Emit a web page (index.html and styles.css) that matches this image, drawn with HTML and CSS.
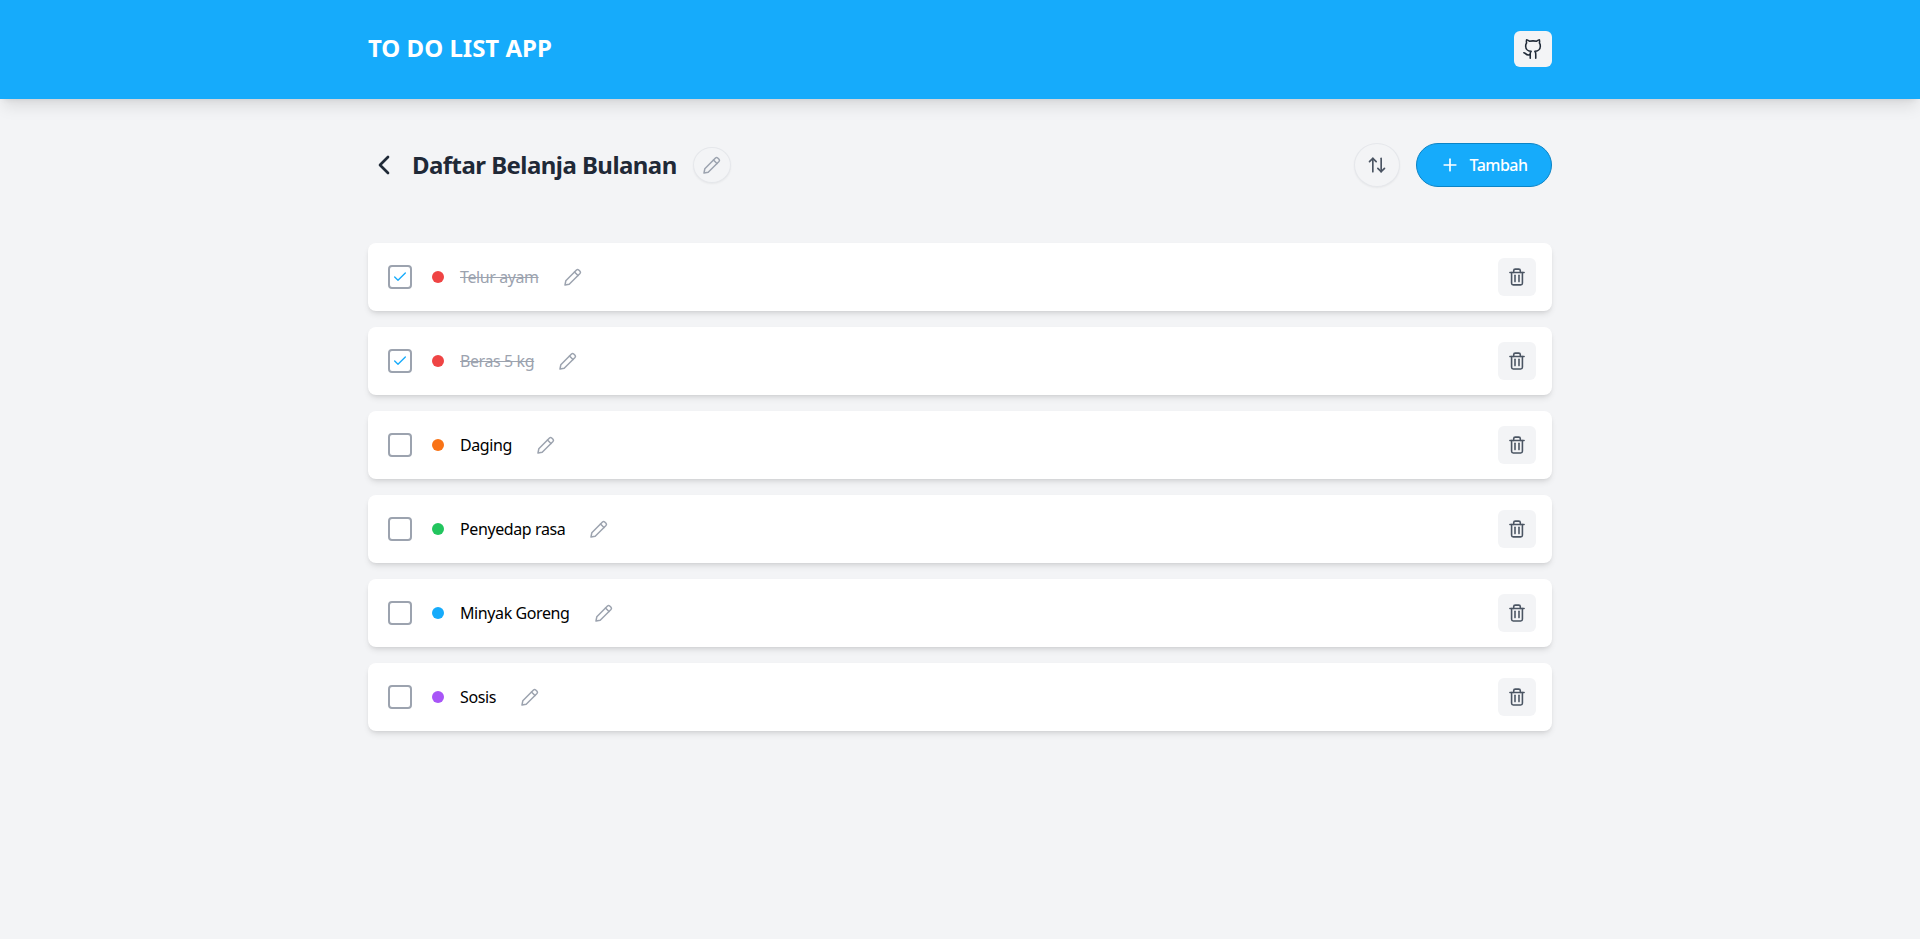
FILE: index.html
```html
<!DOCTYPE html>
<html lang="id">
<head>
<meta charset="utf-8">
<title>To Do List App</title>
<link rel="stylesheet" href="styles.css">
</head>
<body>
<svg class="sprite" aria-hidden="true">
  <symbol id="pencil" viewBox="0 0 24 24"><path d="M4 20l.8-4.200L15.500 5a1.600 1.600 0 0 1 2.200 0L19 6.300a1.600 1.600 0 0 1 0 2.200L8.200 19.200z"/><path d="m13.500 7 3.500 3.500"/></symbol>
  <symbol id="trash" viewBox="0 0 24 24"><path d="M3.500 6.500h17"/><path d="M5.500 6.500V19.500a2 2 0 0 0 2 2h9a2 2 0 0 0 2-2V6.500"/><path d="M8 6.500V4.500a2 2 0 0 1 2-2h4a2 2 0 0 1 2 2v2"/><path d="M9.600 10v7.500"/><path d="M14.400 10v7.500"/></symbol>
  <symbol id="check" viewBox="0 0 24 24"><path d="M20 6 9 17l-5-5"/></symbol>
</svg>
<header class="topbar">
  <div class="topbar-inner">
    <h1 class="brand">TO DO LIST APP</h1>
    <a class="github" href="#" aria-label="GitHub">
      <svg class="icon icon-github" viewBox="0 0 24 24"><path d="M15 22v-4a4.800 4.800 0 0 0-1-3.500c3 0 6-2 6-5.500.08-1.250-.27-2.480-1-3.500.28-1.150.28-2.350 0-3.500 0 0-1 0-3 1.500-2.640-.5-5.360-.5-8 0C6 2 5 2 5 2c-.3 1.150-.3 2.350 0 3.500A5.403 5.403 0 0 0 4 9c0 3.500 3 5.500 6 5.500-.39.49-.68 1.050-.85 1.650-.17.6-.22 1.230-.15 1.850v4"/><path d="M9 18c-4.510 2-5-2-7-2"/></svg>
    </a>
  </div>
</header>
<main class="page">
  <section class="title-row">
    <div class="title-left">
      <button class="back" aria-label="Kembali">
        <svg class="icon icon-back" viewBox="0 0 24 24"><path d="m15 18-6-6 6-6"/></svg>
      </button>
      <h2 class="title">Daftar Belanja Bulanan</h2>
      <button class="title-edit" aria-label="Ubah judul"><svg class="icon icon-pencil"><use href="#pencil"/></svg></button>
    </div>
    <div class="title-right">
      <button class="sort" aria-label="Urutkan">
        <svg class="icon icon-sort" viewBox="0 0 24 24"><path d="m21 16-4 4-4-4"/><path d="M17 20V4"/><path d="m3 8 4-4 4 4"/><path d="M7 4v16"/></svg>
      </button>
      <button class="add">
        <svg class="icon icon-plus" viewBox="0 0 24 24"><path d="M5 12h14"/><path d="M12 5v14"/></svg>
        <span>Tambah</span>
      </button>
    </div>
  </section>
  <ul class="list">
    <li class="item done">
      <span class="box"><svg class="icon icon-check"><use href="#check"/></svg></span>
      <span class="dot red"></span>
      <span class="name">Telur ayam</span>
      <button class="item-edit" aria-label="Ubah"><svg class="icon icon-pencil"><use href="#pencil"/></svg></button>
      <button class="trash" aria-label="Hapus"><svg class="icon icon-trash"><use href="#trash"/></svg></button>
    </li>
    <li class="item done">
      <span class="box"><svg class="icon icon-check"><use href="#check"/></svg></span>
      <span class="dot red"></span>
      <span class="name">Beras 5 kg</span>
      <button class="item-edit" aria-label="Ubah"><svg class="icon icon-pencil"><use href="#pencil"/></svg></button>
      <button class="trash" aria-label="Hapus"><svg class="icon icon-trash"><use href="#trash"/></svg></button>
    </li>
    <li class="item">
      <span class="box"></span>
      <span class="dot orange"></span>
      <span class="name">Daging</span>
      <button class="item-edit" aria-label="Ubah"><svg class="icon icon-pencil"><use href="#pencil"/></svg></button>
      <button class="trash" aria-label="Hapus"><svg class="icon icon-trash"><use href="#trash"/></svg></button>
    </li>
    <li class="item">
      <span class="box"></span>
      <span class="dot green"></span>
      <span class="name">Penyedap rasa</span>
      <button class="item-edit" aria-label="Ubah"><svg class="icon icon-pencil"><use href="#pencil"/></svg></button>
      <button class="trash" aria-label="Hapus"><svg class="icon icon-trash"><use href="#trash"/></svg></button>
    </li>
    <li class="item">
      <span class="box"></span>
      <span class="dot blue"></span>
      <span class="name">Minyak Goreng</span>
      <button class="item-edit" aria-label="Ubah"><svg class="icon icon-pencil"><use href="#pencil"/></svg></button>
      <button class="trash" aria-label="Hapus"><svg class="icon icon-trash"><use href="#trash"/></svg></button>
    </li>
    <li class="item">
      <span class="box"></span>
      <span class="dot purple"></span>
      <span class="name">Sosis</span>
      <button class="item-edit" aria-label="Ubah"><svg class="icon icon-pencil"><use href="#pencil"/></svg></button>
      <button class="trash" aria-label="Hapus"><svg class="icon icon-trash"><use href="#trash"/></svg></button>
    </li>
  </ul>
</main>
</body>
</html>
```

FILE: styles.css
```css
* { box-sizing: border-box; }
html, body { height: 100%; }
body {
  margin: 0;
  background: #f3f4f6;
  font-family: "Noto Sans", "Open Sans", sans-serif;
  color: #000;
  overflow: hidden;
}
button { font: inherit; padding: 0; border: 0; background: none; cursor: pointer; }
h1, h2, ul { margin: 0; padding: 0; }
.sprite { display: none; }
.icon {
  display: block;
  fill: none;
  stroke: currentColor;
  stroke-width: 2;
  stroke-linecap: round;
  stroke-linejoin: round;
}

.topbar {
  height: 99px;
  background: #16abfb;
  box-shadow: 0 10px 15px -3px rgba(0,0,0,.1), 0 4px 6px -4px rgba(0,0,0,.1);
}
.topbar-inner {
  width: 1184px;
  height: 100%;
  margin: 0 auto;
  display: flex;
  align-items: center;
  justify-content: space-between;
}
.brand {
  font-size: 24px;
  line-height: 32px;
  font-weight: 700;
  color: #fff;
  margin-top: -4px;
}
.github {
  width: 38px;
  height: 36px;
  margin-top: -1px;
  border-radius: 6px;
  background: #f3f4f6;
  color: #1f2937;
  display: flex;
  align-items: center;
  justify-content: center;
}
.icon-github { width: 22px; height: 22px; stroke-width: 1.7; }

.page { width: 1184px; margin: 0 auto; }

.title-row {
  margin-top: 44px;
  height: 44px;
  display: flex;
  align-items: center;
  justify-content: space-between;
}
.title-left { display: flex; align-items: center; }
.back {
  width: 32px;
  height: 32px;
  margin-right: 12px;
  color: #1f2937;
  display: flex;
  align-items: center;
  justify-content: center;
}
.icon-back { width: 32px; height: 32px; stroke-width: 2; }
.title {
  font-size: 24px;
  line-height: 32px;
  font-weight: 700;
  letter-spacing: -0.55px;
  color: #1f2937;
}
.title-edit {
  width: 38px;
  height: 36px;
  margin-left: 16px;
  border-radius: 50%;
  border: 1px solid #e5e7eb;
  background: #f3f4f6;
  box-shadow: 0 1px 2px rgba(0,0,0,.05);
  color: #9ca3af;
  display: flex;
  align-items: center;
  justify-content: center;
}
.icon-pencil { width: 24px; height: 24px; stroke-width: 1.5; }
.title-right { display: flex; align-items: center; gap: 16px; }
.sort {
  width: 46px;
  height: 44px;
  border-radius: 50%;
  border: 1px solid #e5e7eb;
  background: #f3f4f6;
  box-shadow: 0 1px 2px rgba(0,0,0,.05);
  color: #4b5563;
  display: flex;
  align-items: center;
  justify-content: center;
}
.icon-sort { width: 20px; height: 20px; }
.add {
  width: 136px;
  height: 44px;
  border-radius: 22px;
  background: #16abfb;
  border: 1px solid #0b84c6;
  color: #fff;
  font-size: 16px;
  font-weight: 500;
  letter-spacing: -0.5px;
  display: flex;
  align-items: center;
  justify-content: center;
  gap: 9px;
}
.icon-plus { width: 20px; height: 20px; }

.list {
  margin-top: 56px;
  list-style: none;
  display: flex;
  flex-direction: column;
  gap: 16px;
}
.item {
  height: 68px;
  padding: 0 16px 0 20px;
  background: #fff;
  border-radius: 8px;
  box-shadow: 0 4px 6px -1px rgba(0,0,0,.1), 0 2px 4px -2px rgba(0,0,0,.1);
  display: flex;
  align-items: center;
}
.box {
  width: 24px;
  height: 24px;
  flex: none;
  border: 2px solid #9ca3af;
  border-radius: 4px;
  background: #fff;
  display: flex;
  align-items: center;
  justify-content: center;
}
.icon-check { width: 16px; height: 16px; color: #16abfb; }
.dot {
  width: 12px;
  height: 12px;
  flex: none;
  margin-left: 20px;
  border-radius: 50%;
}
.red { background: #ef4444; }
.orange { background: #f97316; }
.green { background: #22c55e; }
.blue { background: #16abfb; }
.purple { background: #a855f7; }
.name {
  margin-left: 16px;
  font-size: 16px;
  line-height: 24px;
  letter-spacing: -0.4px;
  color: #000;
}
.done .name {
  color: #9ca3af;
  text-decoration: line-through;
}
.item-edit {
  margin-left: 22px;
  color: #9ca3af;
}
.trash {
  width: 38px;
  height: 38px;
  margin-left: auto;
  border-radius: 6px;
  background: #f3f4f6;
  color: #4b5563;
  display: flex;
  align-items: center;
  justify-content: center;
}
.icon-trash { width: 20px; height: 20px; stroke-width: 1.9; }
```
